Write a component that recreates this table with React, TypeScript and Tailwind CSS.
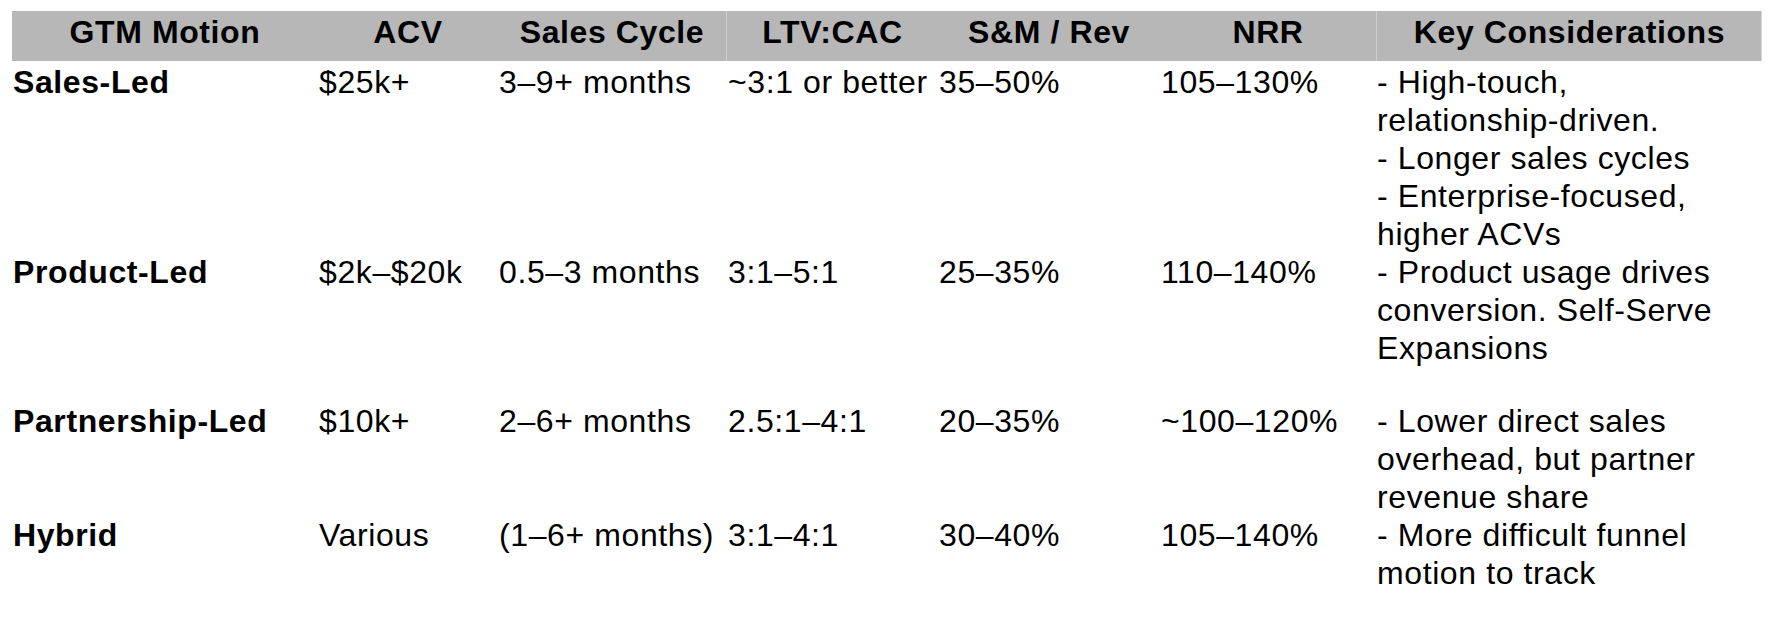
import React from 'react';

const headers = ['GTM Motion', 'ACV', 'Sales Cycle', 'LTV:CAC', 'S&M / Rev', 'NRR', 'Key Considerations'];

const rows = [
  {
    motion: 'Sales-Led',
    acv: '$25k+',
    cycle: '3–9+ months',
    ltv: '~3:1 or better',
    sm: '35–50%',
    nrr: '105–130%',
    notes: ['- High-touch,', 'relationship-driven.', '- Longer sales cycles', '- Enterprise-focused,', 'higher ACVs'],
    extra: '',
  },
  {
    motion: 'Product-Led',
    acv: '$2k–$20k',
    cycle: '0.5–3 months',
    ltv: '3:1–5:1',
    sm: '25–35%',
    nrr: '110–140%',
    notes: ['- Product usage drives', 'conversion. Self-Serve', 'Expansions'],
    extra: 'pb-[35px]',
  },
  {
    motion: 'Partnership-Led',
    acv: '$10k+',
    cycle: '2–6+ months',
    ltv: '2.5:1–4:1',
    sm: '20–35%',
    nrr: '~100–120%',
    notes: ['- Lower direct sales', 'overhead, but partner', 'revenue share'],
    extra: '',
  },
  {
    motion: 'Hybrid',
    acv: 'Various',
    cycle: '(1–6+ months)',
    ltv: '3:1–4:1',
    sm: '30–40%',
    nrr: '105–140%',
    notes: ['- More difficult funnel', 'motion to track'],
    extra: '',
  },
];

const cols = 'grid grid-cols-[306px_180px_228px_212px_222px_216px_386px]';

export default function App() {
  return (
    <div
      className="min-h-[618px] bg-white pt-[11px] pl-[12px] text-[32px] leading-[38px] tracking-[0.6px] text-black"
      style={{ fontFamily: '"Liberation Sans", Arial, sans-serif' }}
    >
      <div className={`${cols} h-[50px] bg-[#b7b7b7] w-[1750px] border-r border-[#d6d6d6]`}>
        {headers.map((h, i) => (
          <div
            key={h}
            className={`pt-[2px] text-center font-bold whitespace-nowrap ${
              i === 3 || i === 6 ? 'border-l border-[#cfcfcf]' : ''
            }`}
          >
            {h}
          </div>
        ))}
      </div>

      <div className="pt-[2px]">
        {rows.map((r) => (
          <div key={r.motion} className={`${cols} ${r.extra}`}>
            <div className="pl-px font-bold whitespace-nowrap">{r.motion}</div>
            <div className="pl-px whitespace-nowrap">{r.acv}</div>
            <div className="pl-px whitespace-nowrap">{r.cycle}</div>
            <div className="pl-[2px] whitespace-nowrap">{r.ltv}</div>
            <div className="pl-px whitespace-nowrap">{r.sm}</div>
            <div className="pl-px whitespace-nowrap">{r.nrr}</div>
            <div className="pl-px">
              {r.notes.map((line, idx) => (
                <div key={idx} className="whitespace-nowrap">
                  {line}
                </div>
              ))}
            </div>
          </div>
        ))}
      </div>
    </div>
  );
}
